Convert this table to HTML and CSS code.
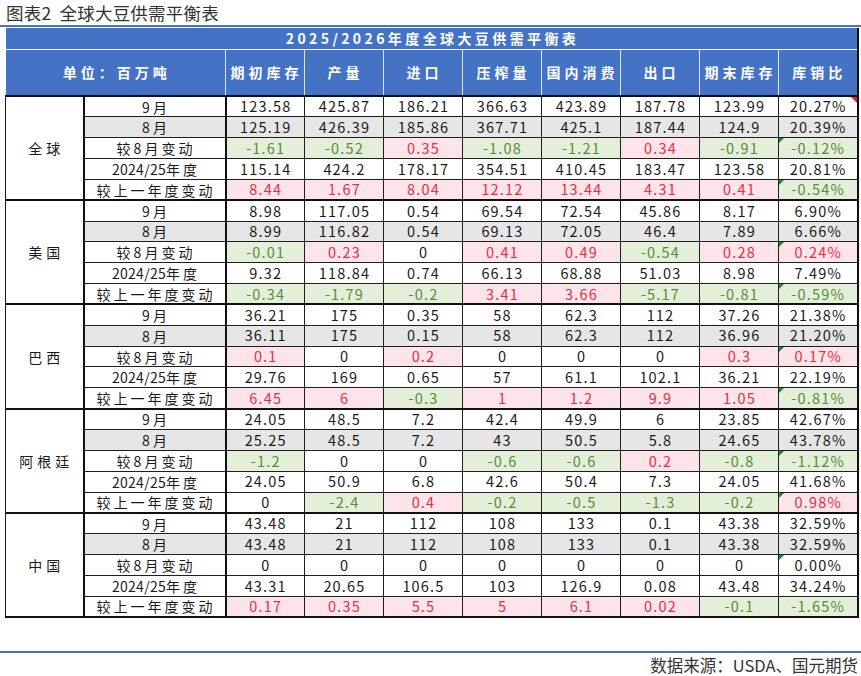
FILE: index.html
```html
<!DOCTYPE html>
<html lang="zh-CN">
<head>
<meta charset="utf-8">
<title>全球大豆供需平衡表</title>
<link rel="stylesheet" href="styles.css">
</head>
<body>
<div class="caption">图表2&nbsp;&nbsp;全球大豆供需平衡表</div>
<div class="rule"></div>
<div class="sheet">
<table class="bal">
<colgroup>
<col class="c-region"><col class="c-label">
<col class="c-num"><col class="c-num"><col class="c-num"><col class="c-num">
<col class="c-num"><col class="c-num"><col class="c-num"><col class="c-num">
</colgroup>
<thead>
<tr class="tr-title"><th colspan="10" class="th-title">2025/2026年度全球大豆供需平衡表</th></tr>
<tr class="tr-head">
<th colspan="2" class="th">单位：百万吨</th>
<th class="th">期初库存</th><th class="th">产量</th><th class="th">进口</th><th class="th">压榨量</th>
<th class="th">国内消费</th><th class="th">出口</th><th class="th">期末库存</th><th class="th th-last">库销比</th>
</tr>
</thead>
<tbody>
<!-- 全球 -->
<tr class="first"><td rowspan="5" class="region">全球</td><td class="lab">9月</td>
<td>123.58</td><td>425.87</td><td>186.21</td><td>366.63</td><td>423.89</td><td>187.78</td><td>123.99</td><td class="last mark-red">20.27%</td></tr>
<tr class="gray"><td class="lab">8月</td>
<td>125.19</td><td>426.39</td><td>185.86</td><td>367.71</td><td>425.1</td><td>187.44</td><td>124.9</td><td class="last">20.39%</td></tr>
<tr><td class="lab">较8月变动</td>
<td class="g">-1.61</td><td class="g">-0.52</td><td class="r">0.35</td><td class="g">-1.08</td><td class="g">-1.21</td><td class="r">0.34</td><td class="g">-0.91</td><td class="last g mark-green">-0.12%</td></tr>
<tr><td class="lab"><span class="yr">2024/25</span>年度</td>
<td>115.14</td><td>424.2</td><td>178.17</td><td>354.51</td><td>410.45</td><td>183.47</td><td>123.58</td><td class="last">20.81%</td></tr>
<tr><td class="lab">较上一年度变动</td>
<td class="r">8.44</td><td class="r">1.67</td><td class="r">8.04</td><td class="r">12.12</td><td class="r">13.44</td><td class="r">4.31</td><td class="r">0.41</td><td class="last g mark-green">-0.54%</td></tr>
<!-- 美国 -->
<tr class="first"><td rowspan="5" class="region">美国</td><td class="lab">9月</td>
<td>8.98</td><td>117.05</td><td>0.54</td><td>69.54</td><td>72.54</td><td>45.86</td><td>8.17</td><td class="last">6.90%</td></tr>
<tr class="gray"><td class="lab">8月</td>
<td>8.99</td><td>116.82</td><td>0.54</td><td>69.13</td><td>72.05</td><td>46.4</td><td>7.89</td><td class="last">6.66%</td></tr>
<tr><td class="lab">较8月变动</td>
<td class="g">-0.01</td><td class="r">0.23</td><td>0</td><td class="r">0.41</td><td class="r">0.49</td><td class="g">-0.54</td><td class="r">0.28</td><td class="last r mark-green">0.24%</td></tr>
<tr><td class="lab"><span class="yr">2024/25</span>年度</td>
<td>9.32</td><td>118.84</td><td>0.74</td><td>66.13</td><td>68.88</td><td>51.03</td><td>8.98</td><td class="last">7.49%</td></tr>
<tr><td class="lab">较上一年度变动</td>
<td class="g">-0.34</td><td class="g">-1.79</td><td class="g">-0.2</td><td class="r">3.41</td><td class="r">3.66</td><td class="g">-5.17</td><td class="g">-0.81</td><td class="last g mark-green">-0.59%</td></tr>
<!-- 巴西 -->
<tr class="first"><td rowspan="5" class="region">巴西</td><td class="lab">9月</td>
<td>36.21</td><td>175</td><td>0.35</td><td>58</td><td>62.3</td><td>112</td><td>37.26</td><td class="last">21.38%</td></tr>
<tr class="gray"><td class="lab">8月</td>
<td>36.11</td><td>175</td><td>0.15</td><td>58</td><td>62.3</td><td>112</td><td>36.96</td><td class="last">21.20%</td></tr>
<tr><td class="lab">较8月变动</td>
<td class="r">0.1</td><td>0</td><td class="r">0.2</td><td>0</td><td>0</td><td>0</td><td class="r">0.3</td><td class="last r mark-green">0.17%</td></tr>
<tr><td class="lab"><span class="yr">2024/25</span>年度</td>
<td>29.76</td><td>169</td><td>0.65</td><td>57</td><td>61.1</td><td>102.1</td><td>36.21</td><td class="last">22.19%</td></tr>
<tr><td class="lab">较上一年度变动</td>
<td class="r">6.45</td><td class="r">6</td><td class="g">-0.3</td><td class="r">1</td><td class="r">1.2</td><td class="r">9.9</td><td class="r">1.05</td><td class="last g mark-green">-0.81%</td></tr>
<!-- 阿根廷 -->
<tr class="first"><td rowspan="5" class="region">阿根廷</td><td class="lab">9月</td>
<td>24.05</td><td>48.5</td><td>7.2</td><td>42.4</td><td>49.9</td><td>6</td><td>23.85</td><td class="last">42.67%</td></tr>
<tr class="gray"><td class="lab">8月</td>
<td>25.25</td><td>48.5</td><td>7.2</td><td>43</td><td>50.5</td><td>5.8</td><td>24.65</td><td class="last">43.78%</td></tr>
<tr><td class="lab">较8月变动</td>
<td class="g">-1.2</td><td>0</td><td>0</td><td class="g">-0.6</td><td class="g">-0.6</td><td class="r">0.2</td><td class="g">-0.8</td><td class="last g mark-green">-1.12%</td></tr>
<tr><td class="lab"><span class="yr">2024/25</span>年度</td>
<td>24.05</td><td>50.9</td><td>6.8</td><td>42.6</td><td>50.4</td><td>7.3</td><td>24.05</td><td class="last">41.68%</td></tr>
<tr><td class="lab">较上一年度变动</td>
<td>0</td><td class="g">-2.4</td><td class="r">0.4</td><td class="g">-0.2</td><td class="g">-0.5</td><td class="g">-1.3</td><td class="g">-0.2</td><td class="last r mark-green">0.98%</td></tr>
<!-- 中国 -->
<tr class="first"><td rowspan="5" class="region">中国</td><td class="lab">9月</td>
<td>43.48</td><td>21</td><td>112</td><td>108</td><td>133</td><td>0.1</td><td>43.38</td><td class="last">32.59%</td></tr>
<tr class="gray"><td class="lab">8月</td>
<td>43.48</td><td>21</td><td>112</td><td>108</td><td>133</td><td>0.1</td><td>43.38</td><td class="last">32.59%</td></tr>
<tr><td class="lab">较8月变动</td>
<td>0</td><td>0</td><td>0</td><td>0</td><td>0</td><td>0</td><td>0</td><td class="last mark-green">0.00%</td></tr>
<tr><td class="lab"><span class="yr">2024/25</span>年度</td>
<td>43.31</td><td>20.65</td><td>106.5</td><td>103</td><td>126.9</td><td>0.08</td><td>43.48</td><td class="last">34.24%</td></tr>
<tr class="end"><td class="lab">较上一年度变动</td>
<td class="r">0.17</td><td class="r">0.35</td><td class="r">5.5</td><td class="r">5</td><td class="r">6.1</td><td class="r">0.02</td><td class="g">-0.1</td><td class="last g">-1.65%</td></tr>
</tbody>
</table>
</div>
<div class="rule rule-bottom"></div>
<div class="source">数据来源：USDA、国元期货</div>
</body>
</html>
```
FILE: styles.css
```css
* { box-sizing: border-box; }

body {
  margin: 0;
  width: 861px;
  background: #ffffff;
  font-family: "Noto Sans CJK SC", "Noto Sans", sans-serif;
  color: #1a1a1a;
}

.caption {
  height: 25px;
  padding-left: 6px;
  font-size: 17.5px;
  line-height: 25px;
  letter-spacing: 0.2px;
  color: #333333;
}

.rule {
  height: 2px;
  background: #4472c4;
}

.sheet {
  padding: 1px 0 0 5px;
}

.bal {
  border-collapse: collapse;
  table-layout: fixed;
  width: 853px;
}

.c-region { width: 78px; }
.c-label { width: 142px; }
.c-num { width: 79px; }

.tr-title { height: 21px; }

.th-title {
  padding: 0 0 0 3px;
  background: #4472c4;
  color: #ffffff;
  font-size: 14px;
  font-weight: 700;
  letter-spacing: 3.4px;
  line-height: 1;
  text-align: center;
  border-bottom: 1px solid #ffffff;
  border-right: 2px solid #111111;
}

.tr-head { height: 47px; }

.th {
  padding: 0 0 0 3px;
  background: #4472c4;
  color: #ffffff;
  font-size: 14px;
  font-weight: 700;
  letter-spacing: 4px;
  line-height: 1;
  text-align: center;
  white-space: nowrap;
  border-right: 1px solid #dfe7f5;
  border-bottom: 1px solid #111111;
}

.th-last { border-right: 2px solid #111111; }

.bal tbody tr { height: 20.85px; }

.bal td {
  position: relative;
  padding: 0 0 0 1px;
  font-size: 14.5px;
  line-height: 1;
  letter-spacing: 1.2px;
  text-align: center;
  white-space: nowrap;
  color: #1a1a1a;
  border: 1px solid #1e1e1e;
}

.bal td.region {
  background: #ffffff;
  font-size: 14px;
  letter-spacing: 4px;
  padding-left: 4px;
  border-left: 1px solid #1e1e1e;
  border-right: 2px solid #111111;
}

.bal td.lab {
  font-size: 14px;
  letter-spacing: 3px;
  padding-left: 3px;
  border-right: 2px solid #111111;
}

.bal td.lab .yr {
  letter-spacing: 0.3px;
}

.bal tr.first td { border-top: 2px solid #111111; }
.bal tr.end td { border-bottom: 2px solid #111111; }
.bal td.region { border-bottom: 2px solid #111111; }
.bal td.last { border-right: 2px solid #111111; }

.bal tr.gray td { background: #e6e6e6; }

.bal td.g {
  background: #e3efd9;
  color: #5a8a3a;
}

.bal td.r {
  background: #fde4eb;
  color: #e2303d;
}

.bal td.mark-green::before {
  content: "";
  position: absolute;
  left: 0;
  top: 0;
  border-top: 5px solid #1f8a2a;
  border-right: 5px solid transparent;
}

.bal td.mark-red::after {
  content: "";
  position: absolute;
  right: 0;
  top: 0;
  border-top: 6px solid #e0202a;
  border-left: 6px solid transparent;
}

.rule-bottom {
  margin-top: 33px;
}

.source {
  padding: 1px 3px 0 0;
  text-align: right;
  font-size: 16.5px;
  line-height: 22px;
  color: #333333;
}
```
